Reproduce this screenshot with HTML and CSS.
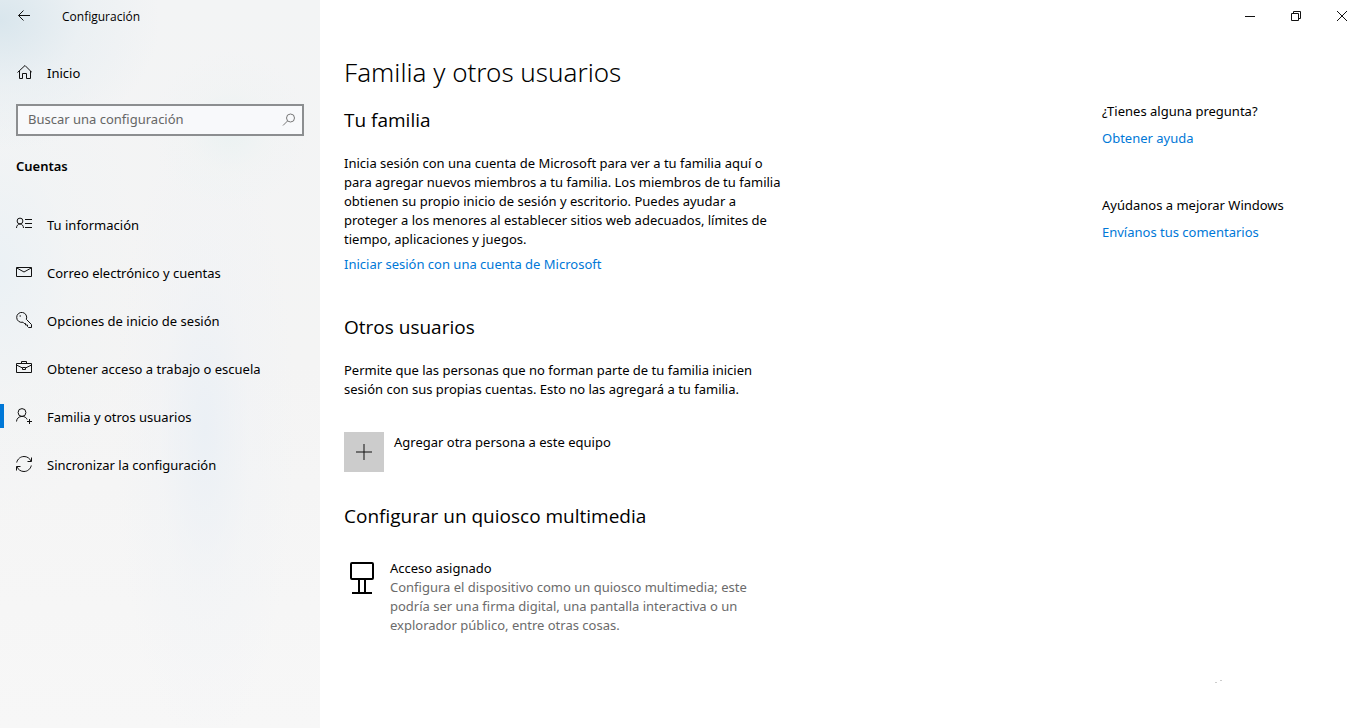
FILE: index.html
```html
<!DOCTYPE html>
<html lang="es">
<head>
<meta charset="utf-8">
<meta name="viewport" content="width=device-width, initial-scale=1">
<title>Configuración</title>
<link rel="stylesheet" href="styles.css">
</head>
<body>
<div class="app">
  <div class="sidebar">
    <header class="app-bar">
      <button class="back" type="button" aria-label="Atrás">
        <svg width="16" height="16" viewBox="0 0 16 16"><path d="M14 7.500H2.500M7.500 2.500l-5 5 5 5"/></svg>
      </button>
      <span class="app-name">Configuración</span>
    </header>
    <a class="nav-link home" href="#">
      <svg width="16" height="16" viewBox="0 0 16 16"><path d="M1.500 8.500L9 1.500l7 7M3.500 7v7.500h3v-5h4v5h4V7"/></svg>
      <span>Inicio</span>
    </a>
    <form class="search">
      <input class="search-input" type="text" placeholder="Buscar una configuración" aria-label="Buscar una configuración">
      <svg width="16" height="16" viewBox="0 0 16 16"><circle cx="9.500" cy="6" r="4"/><path d="M6.500 9L2 13.500"/></svg>
    </form>
    <h2 class="category">Cuentas</h2>
    <nav class="nav">
      <a class="nav-link" href="#">
        <svg width="16" height="16" viewBox="0 0 16 16"><circle cx="4" cy="5" r="2.900"/><path d="M.5 12c0-2.400 1.600-4 3.500-4s3.500 1.600 3.500 4M9 3.500h7M9 7.500h7M9 11.500h7"/></svg>
        <span>Tu información</span>
      </a>
      <a class="nav-link" href="#">
        <svg width="16" height="16" viewBox="0 0 16 16"><path d="M.5 3.500h15v9H.5zM.8 4L8 8l7.200-4"/></svg>
        <span>Correo electrónico y cuentas</span>
      </a>
      <a class="nav-link" href="#">
        <svg width="16" height="16" viewBox="0 0 16 16"><path d="M10.300 7.300A5 5 0 1 0 7 10.200L8.200 11.500h1.300v1.500h2v1.500l1 1h3v-3z"/><path d="M3.500 4h1.500"/></svg>
        <span>Opciones de inicio de sesión</span>
      </a>
      <a class="nav-link" href="#">
        <svg width="16" height="16" viewBox="0 0 16 16"><path d="M.5 3.500h15v9H.5zM5.500 3.500v-2h5v2M.5 5l6 3M15.500 5l-6 3M6.500 7.500h3v2h-3z"/></svg>
        <span>Obtener acceso a trabajo o escuela</span>
      </a>
      <a class="nav-link current" href="#" aria-current="page">
        <svg width="16" height="16" viewBox="0 0 16 16"><circle cx="6" cy="4.500" r="3.900"/><path d="M.5 13.500c.2-3.100 2.400-5.100 5.500-5.100 2.500 0 4.300 1.100 5.200 3.100M11 13.500h5M13.500 11v5"/></svg>
        <span>Familia y otros usuarios</span>
      </a>
      <a class="nav-link" href="#">
        <svg width="16" height="16" viewBox="0 0 16 16"><path d="M.7 6.500C1.500 3 4.500.5 8 .5c3.200 0 5.800 1.800 7.100 4.700M15.500 1.500v4h-4M15.300 9.500c-.8 3.500-3.800 6-7.300 6-3.200 0-5.800-1.800-7.100-4.700M.5 14.500v-4h4"/></svg>
        <span>Sincronizar la configuración</span>
      </a>
    </nav>
  </div>

  <div class="page">
    <div class="window-controls">
      <button type="button" aria-label="Minimizar"><svg width="12" height="12" viewBox="0 0 12 12"><path d="M1 6.500h10"/></svg></button>
      <button type="button" aria-label="Restaurar"><svg width="12" height="12" viewBox="0 0 12 12"><path d="M1.500 3.500h7v7h-7zM3.500 3.500v-2h7v7h-2"/></svg></button>
      <button type="button" aria-label="Cerrar"><svg width="12" height="12" viewBox="0 0 12 12"><path d="M1 1l10 10M11 1L1 11"/></svg></button>
    </div>
    <div class="columns">
      <main class="content">
        <h1>Familia y otros usuarios</h1>
        <section class="family">
          <h2>Tu familia</h2>
          <p>Inicia sesión con una cuenta de Microsoft para ver a tu familia aquí o para agregar nuevos miembros a tu familia. Los miembros de tu familia obtienen su propio inicio de sesión y escritorio. Puedes ayudar a proteger a los menores al establecer sitios web adecuados, límites de tiempo, aplicaciones y juegos.</p>
          <a class="link" href="#">Iniciar sesión con una cuenta de Microsoft</a>
        </section>
        <section class="others">
          <h2>Otros usuarios</h2>
          <p>Permite que las personas que no forman parte de tu familia inicien sesión con sus propias cuentas. Esto no las agregará a tu familia.</p>
          <button class="add" type="button">
            <span class="add-icon"><svg width="16" height="16" viewBox="0 0 16 16"><path d="M0 8h16M8 0v16"/></svg></span>
            <span class="add-label">Agregar otra persona a este equipo</span>
          </button>
        </section>
        <section class="kiosk">
          <h2>Configurar un quiosco multimedia</h2>
          <button class="assigned" type="button">
            <svg width="24" height="32" viewBox="0 0 24 32"><rect x="1" y="1" width="22" height="16" rx="1"/><path d="M9 17v14M15 17v14M2 31h20"/></svg>
            <span class="assigned-text">
              <span>Acceso asignado</span>
              <span class="muted">Configura el dispositivo como un quiosco multimedia; este podría ser una firma digital, una pantalla interactiva o un explorador público, entre otras cosas.</span>
            </span>
          </button>
        </section>
      </main>
      <aside class="help">
        <div class="help-group">
          <p>¿Tienes alguna pregunta?</p>
          <a class="link" href="#">Obtener ayuda</a>
        </div>
        <div class="help-group">
          <p>Ayúdanos a mejorar Windows</p>
          <a class="link" href="#">Envíanos tus comentarios</a>
        </div>
        <svg class="specks" width="8" height="4" viewBox="0 0 8 4" aria-hidden="true"><path d="M0 2h2v1H0zM5 0h2v1H5z"/></svg>
      </aside>
    </div>
  </div>
</div>
</body>
</html>
```
FILE: styles.css
```css
* {
  box-sizing: border-box;
}

body {
  margin: 0;
  background: #fff;
  color: #000;
  font: 13px/19px "Noto Sans", "Open Sans", sans-serif;
}

h1, h2, p {
  margin: 0;
}

button {
  padding: 0;
  border: 0;
  background: none;
  color: inherit;
  font: inherit;
  text-align: left;
}

a {
  color: inherit;
  text-decoration: none;
}

svg {
  flex: none;
  fill: none;
  stroke: #111;
}

.app {
  display: grid;
  grid-template-columns: 320px 1fr;
  min-height: 100vh;
}

.sidebar {
  background:
    radial-gradient(ellipse 160px 130px at 0 20px, #d9e6ed, #e3ecf180 50%, #f3f4f500),
    radial-gradient(ellipse 80px 80px at 230px 130px, #ebf2f2, #eff3f366 50%, #f3f4f500),
    radial-gradient(ellipse 90px 320px at 205px 430px, #ebf0f5, #eff2f666 50%, #f3f4f500),
    radial-gradient(ellipse 140px 250px at 0 270px, #ebf1f5, #eff3f566 50%, #f3f4f500),
    linear-gradient(#f3f4f5, #f4f4f4 50%, #f7f7f7);
}

.app-bar {
  display: flex;
  align-items: center;
  height: 32px;
  padding-left: 16px;
  gap: 30px;
  font: 12px/19px "Open Sans", "Noto Sans", sans-serif;
}

.back {
  display: flex;
}

.nav-link {
  display: flex;
  align-items: center;
  gap: 15px;
  height: 48px;
  padding-left: 16px;
}

.nav-link span {
  padding-top: 2px;
}

.home {
  margin: 16px 0 8px;
}

.search {
  display: flex;
  align-items: center;
  height: 32px;
  margin: 0 16px;
  padding: 0 5px 0 10px;
  border: 2px solid #8c8e90;
  background: #f8f9fb;
}

.search svg {
  stroke: #777;
}

.search-input {
  flex: 1;
  min-width: 0;
  padding: 0 0 2px;
  border: 0;
  outline: 0;
  background: none;
  font: inherit;
}

.search-input::placeholder {
  color: #666;
  opacity: 1;
}

.category {
  margin: 21px 16px 24px;
  font-size: 13px;
  font-weight: 600;
}

.current {
  background: linear-gradient(#0078d7, #0078d7) left center / 4px 24px no-repeat;
}

.page {
  display: flex;
  flex-direction: column;
}

.window-controls {
  display: flex;
  justify-content: flex-end;
}

.window-controls button {
  display: flex;
  align-items: center;
  justify-content: center;
  width: 46px;
  height: 32px;
}

.columns {
  display: flex;
  flex: 1;
  justify-content: space-between;
  padding: 20px 24px 44px;
}

.content {
  width: 448px;
}

h1 {
  font: 300 26px/40px "Noto Sans", "Open Sans", sans-serif;
}

.content h2 {
  font: 400 19px/28px "Open Sans", "Noto Sans", sans-serif;
}

.family {
  margin-top: 14px;
}

.content p {
  margin-top: 20px;
}

.link {
  display: block;
  color: #0078d7;
}

.content .link {
  margin-top: 6px;
}

.others {
  margin-top: 39px;
}

.add {
  display: flex;
  gap: 10px;
  margin-top: 33px;
}

.add-label {
  padding-top: 1px;
}

.add-icon {
  display: flex;
  align-items: center;
  justify-content: center;
  width: 40px;
  height: 40px;
  background: #ccc;
}

.kiosk {
  margin-top: 30px;
}

.assigned {
  display: flex;
  gap: 16px;
  margin-top: 29px;
  padding: 0 20px 0 6px;
}

.assigned svg {
  margin-top: 3px;
  stroke: #000;
  stroke-width: 2;
}

.assigned-text {
  display: flex;
  flex-direction: column;
}

.muted {
  color: #6b6b6b;
}

.help {
  display: flex;
  flex-direction: column;
  width: 239px;
  padding-top: 50px;
  gap: 48px;
}

.help-group {
  display: flex;
  flex-direction: column;
  gap: 8px;
}

.specks {
  margin: auto 0 0 113px;
  fill: #ccc;
  stroke: none;
}
```
